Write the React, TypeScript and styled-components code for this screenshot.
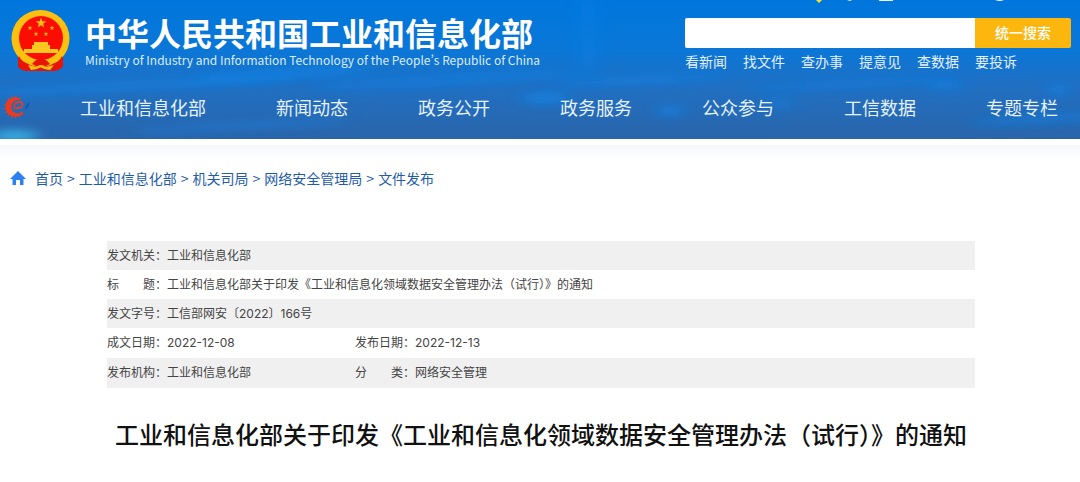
import React from "react";
import styled, { createGlobalStyle } from "styled-components";

const GlobalStyle = createGlobalStyle`
  * { box-sizing: border-box; }
  body {
    margin: 0;
    background: #fff;
    font-family: "Noto Sans CJK SC", sans-serif;
  }
  a { color: inherit; text-decoration: none; }
`;

const Header = styled.header`
  position: relative;
  overflow: hidden;
  color: #fff;
  background: linear-gradient(#0076dc 0%, #0a77d8 35%, #1f70c4 60%, #2a65aa 100%);
`;

const Water = styled.svg`
  position: absolute;
  inset: 0;
  width: 100%;
  height: 100%;
`;

const HeaderTop = styled.div`
  position: relative;
  display: flex;
  justify-content: space-between;
  padding: 8px 9px 0 10px;
  height: 80px;
`;

const Brand = styled.a`
  display: flex;
  gap: 14px;
`;

const Emblem = styled.svg`
  width: 61px;
  height: 64px;
  flex: none;
`;

const BrandText = styled.div`
  padding-top: 5px;
  white-space: nowrap;
`;

const BrandName = styled.h1`
  margin: 0;
  font-size: 32px;
  line-height: 38px;
  font-weight: 700;
`;

const BrandSub = styled.p`
  margin: 0;
  font-size: 12px;
  line-height: 18px;
  font-feature-settings: "pwid";
  color: #d9ecff;
`;

const SearchArea = styled.form`
  width: 386px;
  padding-top: 10px;
`;

const SearchBar = styled.div`
  display: flex;
  height: 30px;
  border-radius: 2px;
  overflow: hidden;
`;

const SearchInput = styled.input`
  flex: 1;
  min-width: 0;
  border: 0;
  padding: 0 10px;
  font: inherit;
  background: #fff;
`;

const SearchButton = styled.button`
  width: 96px;
  border: 0;
  padding: 0 0 2px;
  background: #fdb60e;
  color: #fff;
  font-family: inherit;
  font-size: 14px;
  font-weight: 500;
`;

const QuickLinks = styled.div`
  display: flex;
  gap: 16px;
  padding-top: 4px;
  font-size: 14px;
  line-height: 18px;
  color: #e2f0ff;
`;

const NavBar = styled.nav`
  position: relative;
  display: flex;
  align-items: center;
  height: 59px;
  padding: 0 22px 6px 3px;
`;

const NavLogo = styled.svg`
  width: 28px;
  height: 26px;
  flex: none;
`;

const NavLinks = styled.div`
  flex: 1;
  display: flex;
  justify-content: space-between;
  margin-left: 49px;
  font-size: 18px;
  line-height: 24px;
  font-weight: 400;
  color: #e6f2ff;
  white-space: nowrap;
`;

const Content = styled.main`
  border-top: 6px solid #fff;
  background: linear-gradient(#f4f7fa, #fff 14px);
`;

const Breadcrumb = styled.nav`
  display: flex;
  align-items: center;
  gap: 4px;
  padding: 23px 10px 0;
  font-size: 14px;
  line-height: 20px;
  color: #1f5da8;
`;

const HomeIcon = styled.svg`
  width: 16px;
  height: 14px;
  margin-right: 5px;
`;

const Article = styled.article`
  padding: 53px 105px 0 107px;
`;

const InfoTable = styled.table`
  width: 100%;
  border-collapse: collapse;
  table-layout: fixed;
  font-family: Inter, "Noto Sans CJK SC", sans-serif;
  font-size: 12px;
  line-height: 16px;
  color: #444;
`;

const InfoRow = styled.tr<{ $paired?: boolean }>`
  height: ${(p) => (p.$paired ? 30 : 29)}px;
  &:nth-child(odd) { background: #f0f0f0; }
`;

const Label = styled.th`
  padding: 0;
  text-align: left;
  font-weight: 400;
  white-space: nowrap;
`;

const Value = styled.td`
  padding: 0;
`;

const Title = styled.h2`
  margin: 28px 0;
  text-align: center;
  font-size: 24px;
  line-height: 36px;
  font-weight: 500;
  color: #111;
  white-space: nowrap;
`;

const quick = ["看新闻", "找文件", "查办事", "提意见", "查数据", "要投诉"];
const nav = ["工业和信息化部", "新闻动态", "政务公开", "政务服务", "公众参与", "工信数据", "专题专栏"];
const crumbs = ["首页", "工业和信息化部", "机关司局", "网络安全管理局", "文件发布"];
const info: [string, string][][] = [
  [["发文机关：", "工业和信息化部"]],
  [["标　　题：", "工业和信息化部关于印发《工业和信息化领域数据安全管理办法（试行）》的通知"]],
  [["发文字号：", "工信部网安〔2022〕166号"]],
  [["成文日期：", "2022-12-08"], ["发布日期：", "2022-12-13"]],
  [["发布机构：", "工业和信息化部"], ["分　　类：", "网络安全管理"]],
];

const star = (cx: number, cy: number, r: number) =>
  Array.from({ length: 10 }, (_, i) => {
    const a = (Math.PI / 5) * i - Math.PI / 2;
    const d = i % 2 ? r * 0.4 : r;
    return `${cx + d * Math.cos(a)},${cy + d * Math.sin(a)}`;
  }).join(" ");

// Tapered rays round the left side of the portal logo's "e".
const rays = Array.from({ length: 13 }, (_, i) => {
  const a = ((40 + i * 21) * Math.PI) / 180;
  const p = (r: number, t: number) => `${12 + r * Math.cos(t)} ${13 + r * Math.sin(t)}`;
  return `M${p(8, a - 0.17)}L${p(12, a + 0.12)}L${p(8, a + 0.17)}z`;
}).join("");

// Light on the water: cx, cy, rx, ry, colour, opacity
const glows = [
  [14, 136, 24, 6, "#3cc4f5", 0.75],
  [130, 86, 170, 5, "#0a86ea", 0.45],
  [280, 74, 90, 6, "#0a86ea", 0.5],
  [240, 126, 110, 4, "#1c7edc", 0.5],
  [450, 80, 140, 6, "#0a80e4", 0.5],
  [545, 98, 24, 6, "#078cf4", 0.55],
  [588, 30, 8, 50, "#0a88ee", 0.3],
  [640, 80, 90, 4, "#0a84ea", 0.5],
  [670, 111, 12, 5, "#0a8cf4", 0.65],
  [780, 103, 14, 5, "#0a86ea", 0.5],
  [850, 84, 110, 4, "#0a80e4", 0.5],
  [945, 86, 18, 4, "#0a8cf4", 0.45],
  [1040, 119, 70, 5, "#0a80e4", 0.5],
  [1058, 90, 10, 5, "#0a8cf4", 0.5],
] as const;

export default function App() {
  return (
    <>
      <GlobalStyle />
      <Header>
        <Water viewBox="0 0 1080 139" preserveAspectRatio="none" aria-hidden="true">
          <defs>
            <filter id="soft" x="-100%" y="-300%" width="300%" height="700%">
              <feGaussianBlur stdDeviation="8 4" />
            </filter>
          </defs>
          {glows.map(([cx, cy, rx, ry, fill, o], i) => (
            <ellipse key={i} cx={cx} cy={cy} rx={rx} ry={ry} fill={fill} opacity={o} filter="url(#soft)" transform={rx > 60 ? `rotate(-3 ${cx} ${cy})` : undefined} />
          ))}
          <path d="M816 0h6l-3 3z" fill="#f5e532" />
          <path d="M847 0h5l-2 1zM879 0h14v1h-14zM995 0q5 2 9 0z" fill="#e8f4ff" />
        </Water>
        <HeaderTop>
          <Brand href="#">
            <Emblem viewBox="0 0 61 64" aria-label="国徽">
              <path d="M8 44L8 59Q12 63 18 63L44 63Q50 62 53 58L53 44z" fill="#e31408" />
              <ellipse cx="30.500" cy="30.500" rx="29" ry="28.500" fill="#fcc010" />
              <circle cx="31" cy="30" r="22" fill="#fb0d02" />
              <path d="M9 48Q12 55 19 56L22 63H17Q11 62 8 58zM52 48Q49 55 42 56L39 63H44Q50 62 53 58z" fill="#e81506" />
              <polygon points={star(31, 15, 5.5)} fill="#fcc010" />
              <polygon points={star(20, 20, 2.5)} fill="#fcc010" />
              <polygon points={star(42, 20, 2.5)} fill="#fcc010" />
              <polygon points={star(26, 26, 2.5)} fill="#fcc010" />
              <polygon points={star(36, 26, 2.5)} fill="#fcc010" />
              <path d="M24 34h14v3h2v4h8v4H14v-4h8v-4h2z" fill="#fcc820" />
              <path d="M20 47h22l-4 4q-3-3-7-3t-7 3z" fill="#fb0d02" />
              <path d="M22 56Q27 50 31 51Q35 50 40 56L34 59H28z" fill="#e81506" />
              <path d="M18 57l8 2q5-4 10 0l8-2-4 5-6-1q-3-3-7 0l-6 1z" fill="#fcc010" />
            </Emblem>
            <BrandText>
              <BrandName>中华人民共和国工业和信息化部</BrandName>
              <BrandSub lang="en">Ministry of Industry and Information Technology of the People’s Republic of China</BrandSub>
            </BrandText>
          </Brand>
          <SearchArea onSubmit={(e) => e.preventDefault()}>
            <SearchBar>
              <SearchInput type="text" aria-label="搜索" />
              <SearchButton type="submit">统一搜索</SearchButton>
            </SearchBar>
            <QuickLinks>
              {quick.map((q) => <a href="#" key={q}>{q}</a>)}
            </QuickLinks>
          </SearchArea>
        </HeaderTop>
        <NavBar>
          <NavLogo viewBox="0 0 28 26" aria-hidden="true">
            <path d={rays} fill="#ee3a1c" />
            <path d="M21 18Q18 23 12 22.500A9.500 9.500 0 1 1 18 5.500Q12 5 9 9.500Q7 14 10 17.500Q14 21 21 18z" fill="#ee3a1c" />
            <path d="M11 14Q19 15 19.500 10.500Q18.500 7 14.500 8Q11 9.500 11 13" fill="none" stroke="#ee3a1c" strokeWidth="1.800" />
            <path d="M22 16Q26 13 26.500 8Q24 10 22.500 13z" fill="#1455a8" />
          </NavLogo>
          <NavLinks>
            {nav.map((n) => <a href="#" key={n}>{n}</a>)}
          </NavLinks>
        </NavBar>
      </Header>
      <Content>
        <Breadcrumb aria-label="位置">
          <HomeIcon viewBox="0 0 16 14" aria-hidden="true">
            <path d="M8 0L16 8H13.500V14H10V9H6V14H2.500V8H0z" fill="#2c80f0" />
          </HomeIcon>
          {crumbs.map((c, i) => (
            <React.Fragment key={c}>
              {i > 0 && <span>&gt;</span>}
              <a href="#">{c}</a>
            </React.Fragment>
          ))}
        </Breadcrumb>
        <Article>
          <InfoTable>
            <colgroup>
              <col width="60" />
              <col width="188" />
              <col width="60" />
              <col />
            </colgroup>
            <tbody>
              {info.map((cells, i) => (
                <InfoRow key={i} $paired={cells.length > 1}>
                  {cells.map(([k, v]) => (
                    <React.Fragment key={k}>
                      <Label scope="row">{k}</Label>
                      <Value colSpan={cells.length > 1 ? 1 : 3}>{v}</Value>
                    </React.Fragment>
                  ))}
                </InfoRow>
              ))}
            </tbody>
          </InfoTable>
          <Title>工业和信息化部关于印发《工业和信息化领域数据安全管理办法（试行）》的通知</Title>
        </Article>
      </Content>
    </>
  );
}
